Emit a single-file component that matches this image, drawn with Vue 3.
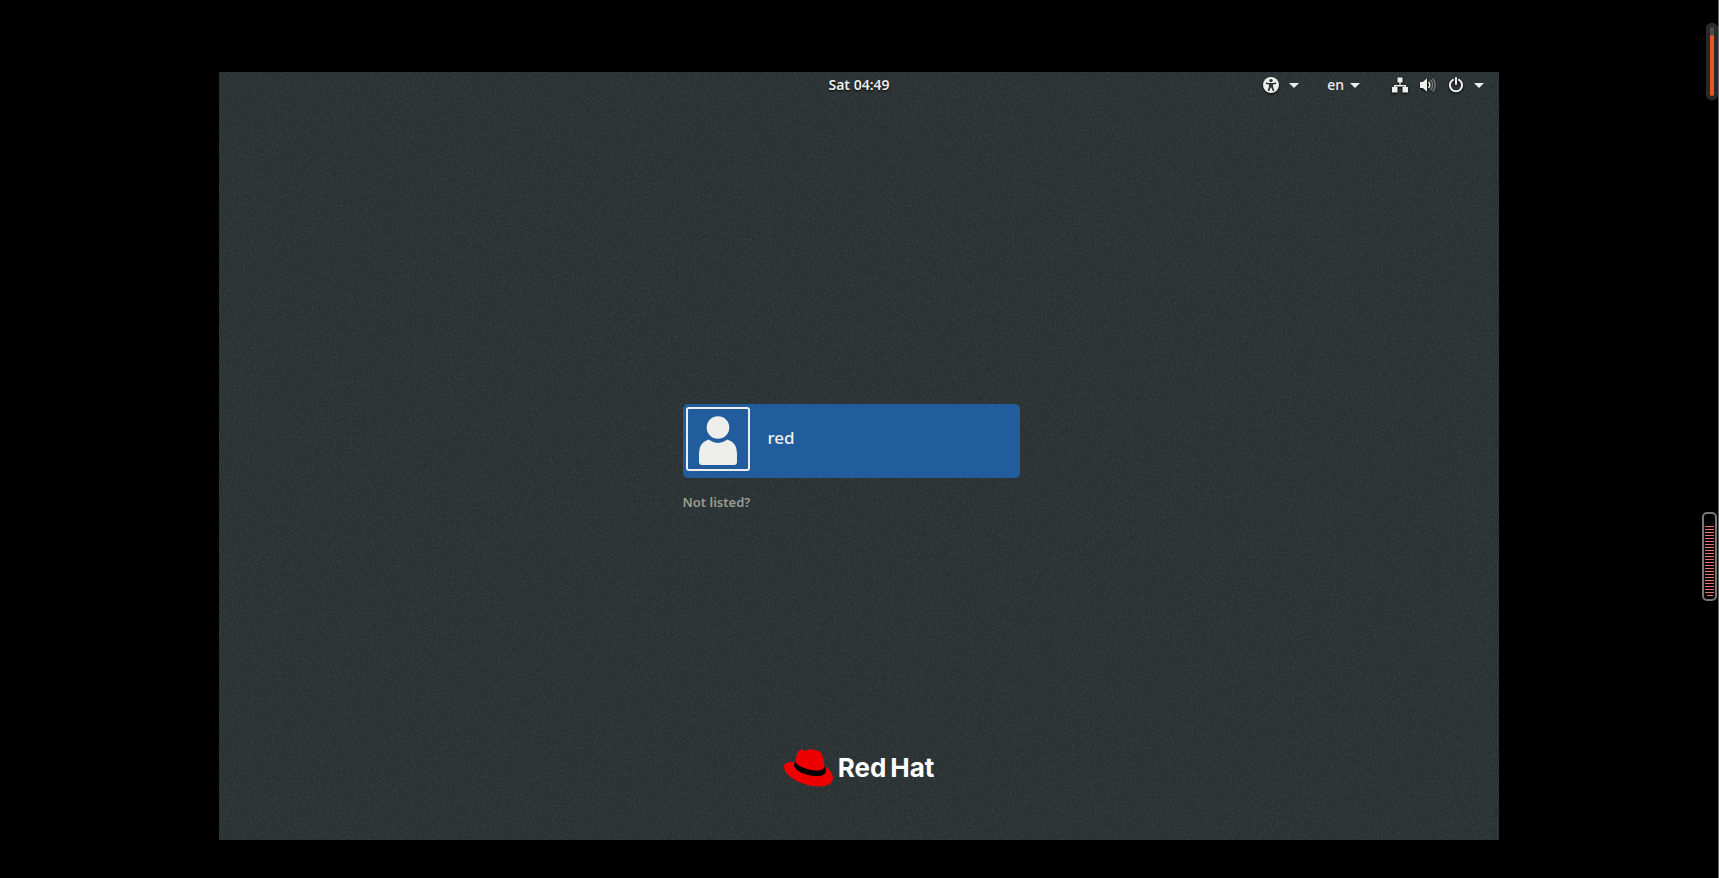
<template>
  <div class="console">
    <main class="screen">
      <svg class="grain" aria-hidden="true">
        <filter id="noise" x="0" y="0" width="100%" height="100%">
          <feTurbulence type="fractalNoise" baseFrequency="0.45" numOctaves="2" seed="4" />
          <feColorMatrix values="0 0 0 0 1  0 0 0 0 1  0 0 0 0 1  0.9 0 0 0 -0.36" />
        </filter>
        <rect width="100%" height="100%" filter="url(#noise)" />
      </svg>

      <header class="topbar">
        <time class="clock">Sat 04:49</time>
        <nav class="tray">
          <button class="menu" aria-label="Accessibility">
            <svg class="icon" viewBox="0 0 16 16">
              <circle cx="8" cy="8" r="8" />
              <g class="cut">
                <circle cx="8" cy="3.6" r="1.7" />
                <path d="M2.8 5.4 6.2 5.9H9.8L13.2 5.4V7L10 7.6V9.6L11.3 13.8 9.9 14.3 8.3 10.6H7.7L6.1 14.3 4.7 13.8 6 9.6V7.6L2.8 7Z" />
              </g>
            </svg>
            <span class="caret"></span>
          </button>
          <button class="menu lang">en<span class="caret"></span></button>
          <button class="menu system" aria-label="System">
            <svg class="icon" viewBox="0 0 16 16">
              <path d="M5.5 0.500h5v5H8.600v2.500H14V10h2v5.500h-5.500V10h2.100V9.400H3.400V10h2.100v5.500H0V10h2V8h5.400V5.500H5.500z" />
            </svg>
            <svg class="icon" viewBox="0 0 16 16">
              <path d="M0 5h2.800L7 1.300v13.400L2.800 11H0z" />
              <path class="wave" d="M8.500 5a4.500 4.500 0 0 1 0 6" />
              <path class="wave dim" d="M10.500 3a7 7 0 0 1 0 10M12.700 1.500a10 10 0 0 1 0 13" />
            </svg>
            <svg class="icon" viewBox="0 0 16 16">
              <path class="power" d="M5 2.800a6.100 6.100 0 1 0 6 0M8 1v6" />
            </svg>
            <span class="caret"></span>
          </button>
        </nav>
      </header>

      <section class="login">
        <button class="user">
          <span class="avatar">
            <svg viewBox="0 0 60 60">
              <circle cx="30" cy="18.500" r="11.300" />
              <path d="M20.500 30.500Q30 37.500 39.500 30.500Q49 34 49 44V53Q49 56 46 56H14Q11 56 11 53V44Q11 34 20.500 30.500Z" />
            </svg>
          </span>
          <span class="name">{{ user }}</span>
        </button>
        <button class="other">Not listed?</button>
      </section>

      <footer class="brand">
        <svg class="hat" viewBox="0 0 50 38">
          <path class="felt" d="M11 13C4 12.500 0 14 0 18C0 26 17 37.500 35 37.500C44 37.500 49 34 49 29C49 24 45.500 20 41 18L38.500 7C37.500 3.500 36.500 2.500 33 1.500C30 .500 27 0 25.500 .200C23.500 .500 24 1.800 21.500 1.700C20 1.600 18 .300 16.500 .500C14.500 1 13.500 3.500 12.700 6Z" />
          <path class="band" d="M11.200 11.500L10 16C10 21 21 27 33 27C39 27 42 25 42 21.500L40.800 16.500C40.500 20 38 21.500 33 21.500C22 21.500 10.800 15.500 11.200 11.500Z" />
        </svg>
        <span>Red</span><span>Hat</span>
      </footer>
    </main>

    <aside class="gauges">
      <div class="volume"><div class="level"></div></div>
      <div class="meter">
        <i v-for="n in 24" :key="n" class="tick"></i>
      </div>
    </aside>
  </div>
</template>

<script setup>
import { ref } from 'vue'

const user = ref('red')
</script>

<style>
body { margin: 0; background: #000; }
</style>

<style scoped>
* { box-sizing: border-box; }
button { background: none; border: none; padding: 0; font: inherit; color: inherit; text-align: left; cursor: pointer; }
svg { display: block; fill: currentColor; }

.console { position: relative; min-height: 100vh; padding: 72px 25px 38px 24px; overflow: hidden; background: #000; font-family: "Noto Sans", "Open Sans", sans-serif; color: #eeeeec; }
.screen { position: relative; max-width: 1280px; aspect-ratio: 5 / 3; margin: 0 auto; display: grid; grid-template-rows: 26px 1fr auto; background: #2b3234; }
.grain { position: absolute; inset: 0; width: 100%; height: 100%; opacity: 0.14; }

.topbar { position: relative; grid-area: 1 / 1; display: grid; grid-template-columns: 1fr auto 1fr; align-items: center; font-size: 14px; font-weight: 600; line-height: 24px; text-shadow: 0 1px 2px #000; }
.clock { grid-column: 2; }
.tray { display: flex; justify-content: flex-end; gap: 28px; padding-right: 15px; font-weight: 500; }
.menu { display: flex; align-items: center; gap: 10px; }
.lang { gap: 6px; }
.system { gap: 12px; margin-left: 4px; }
.system .caret { margin-left: -2px; }
.icon { width: 16px; height: 16px; overflow: visible; filter: drop-shadow(0 1px 1px #000); }
.cut { fill: #2b3234; }
.wave { fill: none; stroke: currentColor; stroke-width: 1.5; }
.dim { opacity: 0.4; }
.power { fill: none; stroke: currentColor; stroke-width: 2; stroke-linecap: round; }
.caret { border: 5px solid transparent; border-top-color: currentColor; border-bottom: none; }

.login { position: relative; grid-area: 1 / 1 / -1 / 1; align-self: center; justify-self: center; width: 337px; margin-right: 16px; padding-top: 4px; }
.user { display: flex; align-items: flex-start; gap: 18px; width: 100%; height: 74px; padding: 3px; background: #215d9c; border-radius: 5px; }
.avatar { width: 64px; height: 64px; border: 2px solid #eeeeec; border-radius: 3px; }
.name { font-size: 17px; font-weight: 500; line-height: 62px; }
.other { margin-top: 14px; font-size: 13px; font-weight: 600; line-height: 20px; color: #9c9c92; }

.brand { position: relative; grid-area: 3 / 1; display: flex; justify-content: center; align-items: center; gap: 4px; padding-bottom: 53px; font-family: Inter, sans-serif; font-size: 26px; font-weight: 700; line-height: 38px; color: #fff; }
.hat { width: 50px; height: 38px; }
.felt { fill: #e00; }
.band { fill: #000; }

.gauges { position: absolute; top: 0; right: 0; bottom: 0; border-right: 1px solid #666; padding-top: 23px; display: flex; flex-direction: column; align-items: flex-end; }
.volume { width: 12px; height: 77px; padding: 12px 4px 4px; background: #4d4d4d; border-radius: 6px; box-shadow: inset 0 0 0 4px #292929; }
.level { height: 61px; background: #e95420; border-radius: 2px; }
.meter { display: flex; flex-direction: column; align-items: center; gap: 2px; width: 15px; height: 89px; margin: 412px 1px 0 0; padding-top: 12px; border: 2px solid #777; border-radius: 5px; }
.tick { flex: none; width: 9px; height: 1px; background: #f07464; }
.tick:last-child { width: 6px; }
</style>
